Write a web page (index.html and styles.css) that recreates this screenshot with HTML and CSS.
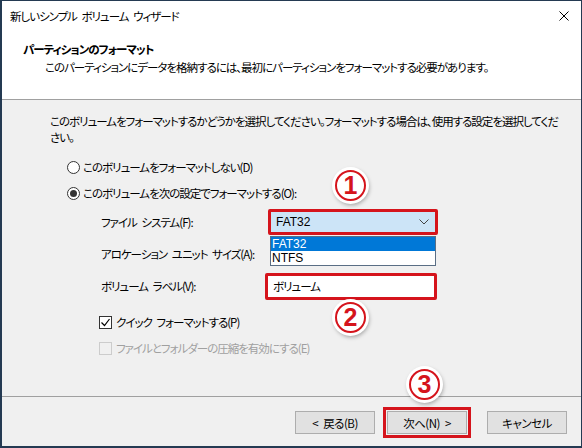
FILE: index.html
```html
<!DOCTYPE html>
<html lang="ja">
    <head>
        <meta charset="UTF-8">
        <title>新しいシンプル ボリューム ウィザード</title>
        <link rel="stylesheet" href="styles.css">
    </head>
    <body>
        <div class="window">
            <div class="titlebar">
                <span class="title">新しいシンプル ボリューム ウィザード</span>
                <svg class="close" width="10" height="10" viewBox="0 0 10 10">
                    <path d="M0.5 0.5 L9.5 9.5 M9.5 0.5 L0.5 9.5" stroke="#000" stroke-width="1" fill="none"/>
                </svg>
            </div>
            <div class="header">
                <div class="h-title">パーティションのフォーマット</div>
                <div class="h-sub">このパーティションにデータを格納するには、最初にパーティションをフォーマットする必要があります。</div>
            </div>
            <div class="content">
                <p class="intro">このボリュームをフォーマットするかどうかを選択してください。フォーマットする場合は、使用する設定を選択してください。</p>
                <div class="opt first"><span class="radio"></span>このボリュームをフォーマットしない(D)</div>
                <div class="opt"><span class="radio on"></span>このボリュームを次の設定でフォーマットする(O):</div>
                <div class="settings">
                    <div class="row">
                        <span class="label">ファイル システム(F):</span>
                        <div class="combo">
                            <span>FAT32</span>
                            <svg width="10" height="6" viewBox="0 0 10 6">
                                <path d="M0.5 0.5 L5 5 L9.5 0.5" stroke="#444" stroke-width="1" fill="none"/>
                            </svg>
                            <ul class="list">
                                <li class="sel">FAT32</li>
                                <li>NTFS</li>
                            </ul>
                        </div>
                    </div>
                    <div class="row">
                        <span class="label">アロケーション ユニット サイズ(A):</span>
                    </div>
                    <div class="row">
                        <span class="label">ボリューム ラベル(V):</span>
                        <div class="textbox">ボリューム</div>
                    </div>
                </div>
                <div class="check first"><span class="box on">
                    <svg width="11" height="11" viewBox="0 0 11 11">
                        <path d="M1.5 5.5 L4.5 8.5 L9.5 2" stroke="#000" stroke-width="1.2" fill="none"/>
                    </svg>
                </span>クイック フォーマットする(P)</div>
                <div class="check disabled"><span class="box"></span>ファイルとフォルダーの圧縮を有効にする(E)</div>

                <!-- annotation marks -->
                <span class="num n1">1</span>
                <span class="num n2">2</span>
            </div>
            <div class="footer">
                <button class="btn">&lt; 戻る(B)</button>
                <button class="btn marked">次へ(N) &gt;</button>
                <button class="btn">キャンセル</button>
                <span class="num n3">3</span>
            </div>
        </div>
    </body>
</html>
```

FILE: styles.css
```css
* {
    box-sizing: border-box;
}
body {
    margin: 0;
    font-family: "Noto Sans CJK JP", sans-serif;
    font-feature-settings: "palt";
    font-size: 11.5px;
    letter-spacing: -1px;
    word-spacing: 3px;
    color: #000;
}
.window {
    width: 582px;
    height: 448px;
    display: flex;
    flex-direction: column;
    border: 1px solid #243a52;
    border-left-width: 2px;
    border-bottom-width: 2px;
    background-color: #f0f0f0;
}
.titlebar {
    height: 31px;
    display: flex;
    align-items: center;
    justify-content: space-between;
    padding: 0 12px 1px 8px;
    background-color: #fff;
}
.header {
    height: 68px;
    background-color: #fff;
    border-bottom: 1px solid #a0a0a0;
    padding-top: 9px;
}
.h-title {
    font-weight: bold;
    line-height: 16px;
    padding-left: 21px;
}
.h-sub {
    line-height: 16px;
    margin-top: 2px;
    padding-left: 43px;
}
.content {
    position: relative;
    flex: 1;
    padding: 13px 20px 0 48px;
}
.intro {
    margin: 0;
    line-height: 16px;
}
.opt {
    display: flex;
    align-items: center;
    height: 26px;
    padding-left: 17px;
}
.opt.first {
    margin-top: 9px;
}
.radio {
    width: 13px;
    height: 13px;
    border: 1px solid #333;
    border-radius: 50%;
    background-color: #fff;
    margin-right: 3px;
    display: flex;
    align-items: center;
    justify-content: center;
}
.radio.on::after {
    content: '';
    width: 7px;
    height: 7px;
    border-radius: 50%;
    background-color: #333;
}
.settings {
    display: flex;
    flex-direction: column;
    gap: 6px;
    margin-top: 3px;
    padding-left: 51px;
}
.row {
    display: flex;
    align-items: center;
    width: 337px;
    height: 26px;
}
.combo {
    position: relative;
    width: 170px;
    height: 26px;
    margin-left: auto;
    display: flex;
    align-items: center;
    justify-content: space-between;
    padding: 0 6px 0 5px;
    border: 3px solid #d5141c;
    border-radius: 2px;
    background-color: #cce4f7;
    font-family: "Liberation Sans", sans-serif;
    font-size: 12px;
    letter-spacing: 0;
}
.list {
    position: absolute;
    top: 24px;
    left: -1px;
    width: 166px;
    margin: 0;
    padding: 0;
    list-style: none;
    background-color: #fff;
    border: 1px solid #5a6e85;
}
.list li {
    height: 14px;
    line-height: 14px;
    padding-left: 1px;
}
.list li.sel {
    background-color: #0078d7;
    color: #fff;
}
.textbox {
    width: 172px;
    height: 27px;
    margin-left: auto;
    margin-right: 1px;
    padding-left: 5px;
    display: flex;
    align-items: center;
    border: 3px solid #d5141c;
    border-radius: 2px;
    background-color: #fff;
}
.check {
    display: flex;
    align-items: center;
    height: 26px;
    padding-left: 49px;
}
.check.first {
    margin-top: 10px;
}
.box {
    width: 13px;
    height: 13px;
    border: 1px solid #333;
    background-color: #fff;
    margin-right: 4px;
    display: flex;
    align-items: center;
    justify-content: center;
}
.check.disabled {
    color: #a0a0a0;
}
.check.disabled .box {
    border-color: #ccc;
    background-color: #f0f0f0;
}
.num {
    position: absolute;
    width: 31px;
    height: 31px;
    border: 2px solid #d5141c;
    border-radius: 50%;
    background-color: #fff;
    color: #d5141c;
    font-family: "Liberation Sans", sans-serif;
    font-weight: bold;
    font-size: 25px;
    letter-spacing: 0;
    line-height: 27px;
    text-align: center;
    box-shadow: 0 0 0 3px #fff, 1px 2px 4px 2px rgba(0, 0, 0, 0.35);
}
.n1 {
    left: 333px;
    top: 70px;
}
.n2 {
    left: 333px;
    top: 202px;
}
.n3 {
    left: 407px;
    top: -28px;
}
.footer {
    position: relative;
    height: 50px;
    border-top: 1px solid #a0a0a0;
    display: flex;
    justify-content: flex-end;
    align-items: flex-start;
    gap: 12px;
    padding: 14px 14px 0 0;
}
.btn {
    width: 80px;
    height: 23px;
    font-family: inherit;
    font-size: 11.5px;
    font-feature-settings: "palt";
    letter-spacing: -0.5px;
    word-spacing: 3px;
    background-color: #e1e1e1;
    border: 1px solid #adadad;
    padding: 0;
}
.btn.marked {
    outline: 3px solid #d5141c;
    outline-offset: 1px;
    margin-right: 8px;
}
```
